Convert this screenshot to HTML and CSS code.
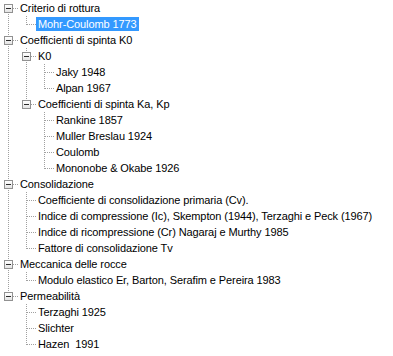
FILE: index.html
```html
<!DOCTYPE html>
<html lang="it">
<head>
    <meta charset="UTF-8">
    <title>Albero dei metodi</title>
    <link rel="stylesheet" href="styles.css">
</head>
<body>
    <ul class="tree">
        <li class="open">
            <div class="row"><span class="box"></span><span class="label">Criterio di rottura</span></div>
            <ul>
                <li><div class="row"><span class="label selected">Mohr-Coulomb 1773</span></div></li>
            </ul>
        </li>
        <li class="open">
            <div class="row"><span class="box"></span><span class="label">Coefficienti di spinta K0</span></div>
            <ul>
                <li class="open">
                    <div class="row"><span class="box"></span><span class="label">K0</span></div>
                    <ul>
                        <li><div class="row"><span class="label">Jaky 1948</span></div></li>
                        <li><div class="row"><span class="label">Alpan 1967</span></div></li>
                    </ul>
                </li>
                <li class="open">
                    <div class="row"><span class="box"></span><span class="label">Coefficienti di spinta Ka, Kp</span></div>
                    <ul>
                        <li><div class="row"><span class="label">Rankine 1857</span></div></li>
                        <li><div class="row"><span class="label">Muller Breslau 1924</span></div></li>
                        <li><div class="row"><span class="label">Coulomb</span></div></li>
                        <li><div class="row"><span class="label">Mononobe &amp; Okabe 1926</span></div></li>
                    </ul>
                </li>
            </ul>
        </li>
        <li class="open">
            <div class="row"><span class="box"></span><span class="label">Consolidazione</span></div>
            <ul>
                <li><div class="row"><span class="label">Coefficiente di consolidazione primaria (Cv).</span></div></li>
                <li><div class="row"><span class="label">Indice di compressione (Ic), Skempton (1944), Terzaghi e Peck (1967)</span></div></li>
                <li><div class="row"><span class="label">Indice di ricompressione (Cr) Nagaraj e Murthy 1985</span></div></li>
                <li><div class="row"><span class="label">Fattore di consolidazione Tv</span></div></li>
            </ul>
        </li>
        <li class="open">
            <div class="row"><span class="box"></span><span class="label">Meccanica delle rocce</span></div>
            <ul>
                <li><div class="row"><span class="label">Modulo elastico Er, Barton, Serafim e Pereira 1983</span></div></li>
            </ul>
        </li>
        <li class="open">
            <div class="row"><span class="box"></span><span class="label">Permeabilità</span></div>
            <ul>
                <li><div class="row"><span class="label">Terzaghi 1925</span></div></li>
                <li><div class="row"><span class="label">Slichter</span></div></li>
                <li><div class="row"><span class="label">Hazen  1991</span></div></li>
            </ul>
        </li>
    </ul>
</body>
</html>
```

FILE: styles.css
```css
body {
    margin: 0;
    background: #fff;
    font-family: "Liberation Sans", Arial, sans-serif;
    font-size: 11px;
    letter-spacing: -0.1px;
    color: #000;
}
.tree,
.tree ul {
    list-style: none;
    margin: 0;
    padding: 0;
}
.tree ul {
    padding-left: 18px;
}
.tree li {
    position: relative;
}
/* dotted tree lines */
.tree li::before {
    content: "";
    position: absolute;
    left: 8px;
    top: 0;
    bottom: 0;
    width: 1px;
    background-image: linear-gradient(to bottom, #a0a0a0 50%, transparent 50%);
    background-size: 1px 2px;
}
.tree li:last-child::before {
    bottom: auto;
    height: 9px;
}
.tree > li:first-child::before {
    top: 8px;
}
.tree li::after {
    content: "";
    position: absolute;
    left: 9px;
    top: 8px;
    width: 9px;
    height: 1px;
    background-image: linear-gradient(to right, #a0a0a0 50%, transparent 50%);
    background-size: 2px 1px;
}
.row {
    height: 16px;
    display: flex;
    align-items: center;
    padding-left: 18px;
    white-space: pre;
}
.label {
    padding: 0 2px;
    line-height: 14px;
}
.label.selected {
    background: #3399ff;
    color: #fff;
}
.box {
    position: absolute;
    left: 4px;
    top: 4px;
    width: 7px;
    height: 7px;
    border: 1px solid #919191;
    background: linear-gradient(#fff, #e4e4e4);
    z-index: 1;
}
.box::after {
    content: "";
    position: absolute;
    left: 1px;
    top: 3px;
    width: 5px;
    height: 1px;
    background: #2b2b2b;
}
```
